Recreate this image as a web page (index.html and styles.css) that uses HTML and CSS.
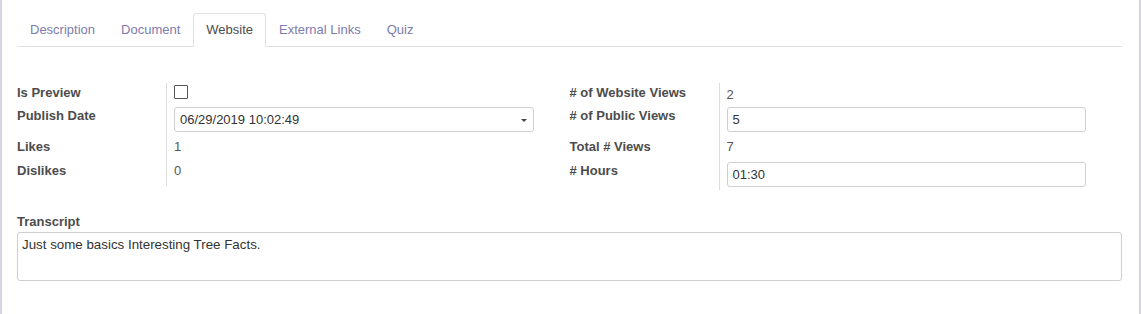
FILE: index.html
```html
<!DOCTYPE html>
<html lang="en">
<head>
  <meta charset="UTF-8">
  <title>Slide - Website</title>
  <link rel="stylesheet" href="styles.css">
</head>
<body>

  <div class="sheet">
    <!-- Notebook tabs -->
    <ul class="tabs">
      <li class="tab">Description</li>
      <li class="tab">Document</li>
      <li class="tab active">Website</li>
      <li class="tab">External Links</li>
      <li class="tab">Quiz</li>
    </ul>

    <div class="groups">
      <!-- Left group -->
      <div class="group">
        <div class="row row-first">
          <div class="label">Is Preview</div>
          <div class="value"><span class="checkbox"></span></div>
        </div>
        <div class="row row-input">
          <div class="label">Publish Date</div>
          <div class="value">
            <div class="input select">06/29/2019 10:02:49<span class="caret"></span></div>
          </div>
        </div>
        <div class="row">
          <div class="label">Likes</div>
          <div class="value text">1</div>
        </div>
        <div class="row row-last">
          <div class="label">Dislikes</div>
          <div class="value text">0</div>
        </div>
      </div>

      <!-- Right group -->
      <div class="group">
        <div class="row row-first">
          <div class="label"># of Website Views</div>
          <div class="value text">2</div>
        </div>
        <div class="row row-input">
          <div class="label"># of Public Views</div>
          <div class="value"><div class="input">5</div></div>
        </div>
        <div class="row">
          <div class="label">Total # Views</div>
          <div class="value text">7</div>
        </div>
        <div class="row row-last">
          <div class="label"># Hours</div>
          <div class="value"><div class="input">01:30</div></div>
        </div>
      </div>
    </div>

    <div class="transcript">
      <div class="label">Transcript</div>
      <div class="textarea">Just some basics Interesting Tree Facts.</div>
    </div>
  </div>

</body>
</html>
```

FILE: styles.css
```css
* {
  margin: 0;
  padding: 0;
  box-sizing: border-box;
}

body {
  font-family: "Liberation Sans", Arial, sans-serif;
  font-size: 13px;
  color: #4c4c4c;
  background-color: white;
}

.sheet {
  height: 314px;
  border-left: 2px solid #d6d4e4;
  border-right: 2px solid #d6d4e4;
  padding: 13px 17px 0 15px;
}

/* Tabs */
.tabs {
  display: flex;
  list-style: none;
  border-bottom: 1px solid #dee2e6;
}

.tab {
  padding: 7px 12px;
  line-height: 18px;
  border: 1px solid transparent;
  border-radius: 3px 3px 0 0;
  margin-bottom: -1px;
  color: #7c7bad;
}

.tab.active {
  color: #4c4c4c;
  background-color: white;
  border-color: #dee2e6 #dee2e6 white;
}

/* Field groups */
.groups {
  display: flex;
  margin-top: 36px;
}

.group {
  flex: 1;
  padding-right: 36px;
}

.row {
  display: flex;
}

.label {
  width: 149px;
  flex-shrink: 0;
  font-weight: bold;
  line-height: 24px;
}

.value {
  flex: 1;
  border-left: 1px solid #dcdcdc;
  padding: 3px 0 3px 7px;
}

.value.text {
  line-height: 24px;
  padding: 0 0 0 7px;
  color: #555;
}

/* first row is a bit shorter */
.row-first .label {
  line-height: 19px;
}

.row-first .value {
  padding: 2px 0 0 7px;
  height: 19px;
  line-height: 19px;
}

.row-input .label {
  padding-top: 2px;
}

.row-input .value {
  padding-top: 5px;
}

.row-last .value.text {
  height: 27px;
}

.checkbox {
  display: block;
  width: 14px;
  height: 14px;
  border: 1px solid #555;
  border-radius: 1px;
}

.input {
  height: 25px;
  line-height: 23px;
  border: 1px solid #cfcfcf;
  border-radius: 3px;
  padding: 0 5px;
  color: #333;
  position: relative;
}

.caret {
  position: absolute;
  right: 6px;
  top: 11px;
  border-left: 3px solid transparent;
  border-right: 3px solid transparent;
  border-top: 3px solid #444;
}

/* Transcript */
.transcript {
  margin-top: 22px;
}

.transcript .label {
  width: auto;
  line-height: 20px;
}

.textarea {
  height: 49px;
  border: 1px solid #cfcfcf;
  border-radius: 3px;
  padding: 3px 4px;
  font-size: 13.33px;
  line-height: 18px;
  color: #333;
}
```
